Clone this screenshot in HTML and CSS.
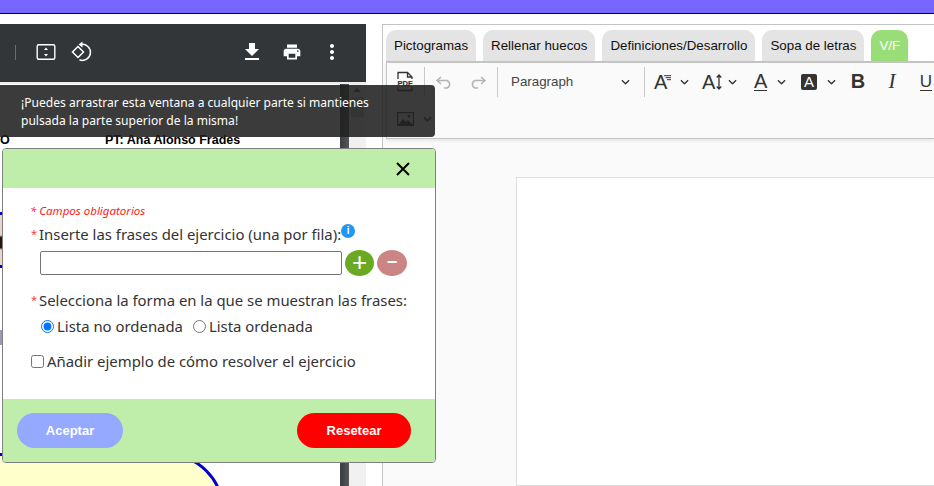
FILE: index.html
```html
<!DOCTYPE html>
<html lang="es">
<head>
    <meta charset="UTF-8">
    <title>Ejercicios</title>
    <link rel="stylesheet" href="styles.css">
</head>
<body>
    <svg class="defs" width="0" height="0">
        <symbol id="chev" viewBox="0 0 10 6"><path d="M1 1l4 4 4-4" fill="none" stroke="currentColor" stroke-width="1.5"/></symbol>
    </svg>
    <div class="topbar"></div>
    <div class="main">
        <!-- visor del pdf -->
        <section class="viewer">
            <div class="pdf-toolbar">
                <span class="pdf-sep"></span>
                <svg class="pdf-icon fit" viewBox="0 0 24 24"><rect x="3.2" y="4.700" width="17.600" height="14.600" rx="1.500" fill="none" stroke="#fff" stroke-width="1.400"/><path d="M12 7.500l2 2.500h-4zM12 16.500l-2-2.500h4z" fill="#fff"/></svg>
                <svg class="pdf-icon rotate" viewBox="0 0 24 24"><path d="M8 6.500l-5.500 5.500 5.500 5.500 5.500-5.500z" fill="none" stroke="#fff" stroke-width="1.500"/><path d="M11 4.500a8 8 0 1 1-1.500 15.300" fill="none" stroke="#fff" stroke-width="1.500"/><path d="M12.500 1.500v6l-4-3z" fill="#fff"/></svg>
                <div class="pdf-actions">
                    <svg class="pdf-icon" viewBox="0 0 24 24"><path fill="#fff" d="M19 9h-4V3H9v6H5l7 7 7-7zM5 18v2h14v-2H5z"/></svg>
                    <svg class="pdf-icon small" viewBox="0 0 24 24"><path fill="#fff" d="M19 8H5c-1.660 0-3 1.340-3 3v6h4v4h12v-4h4v-6c0-1.660-1.340-3-3-3zm-3 11H8v-5h8v5zm3-7c-.55 0-1-.45-1-1s.45-1 1-1 1 .45 1 1-.45 1-1 1zm-1-9H6v4h12V3z"/></svg>
                    <svg class="pdf-icon" viewBox="0 0 24 24"><path fill="#fff" d="M12 8c1.100 0 2-.9 2-2s-.9-2-2-2-2 .9-2 2 .9 2 2 2zm0 2c-1.100 0-2 .9-2 2s.9 2 2 2 2-.9 2-2-.9-2-2-2zm0 6c-1.100 0-2 .9-2 2s.9 2 2 2 2-.9 2-2-.9-2-2-2z"/></svg>
                </div>
            </div>
            <div class="pdf-body">
                <div class="pdf-page">
                    <span class="pdf-text pdf-o">O</span>
                    <span class="pdf-text pdf-pt">PT: Ana Alonso Frades</span>
                    <div class="pdf-pic"></div>
                    <div class="pdf-mark"></div>
                    <div class="pdf-bubble"></div>
                </div>
                <div class="pdf-shadow"></div>
                <div class="pdf-scroll">
                    <span class="scroll-arrow"></span>
                    <span class="scroll-thumb"></span>
                </div>
            </div>
        </section>

        <!-- editor -->
        <section class="editor">
            <div class="tabs">
                <span class="tab">Pictogramas</span>
                <span class="tab">Rellenar huecos</span>
                <span class="tab">Definiciones/Desarrollo</span>
                <span class="tab">Sopa de letras</span>
                <span class="tab tab-active">V/F</span>
            </div>
            <div class="toolbar">
                <div class="tb-row">
                    <span class="tb-btn w34">
                        <svg class="pdf-file" width="18" height="21" viewBox="0 0 18 21"><path d="M2 8V1.500h9.500l4.500 4.500v2M2 16v3.500h14V16M11.500 1.500V6H16" fill="none" stroke="#333" stroke-width="1.300"/><text x="9" y="14.500" text-anchor="middle" class="pdf-label">PDF</text></svg>
                    </span>
                    <span class="tb-sep"></span>
                    <span class="tb-btn w34">
                        <svg width="18" height="14" viewBox="0 0 18 14"><path d="M6 2L2 5.500 6 9M2 5.500h10a4 4 0 0 1 0 7.500H9" fill="none" stroke="#b4b4b4" stroke-width="1.500"/></svg>
                    </span>
                    <span class="tb-btn w34">
                        <svg width="18" height="14" viewBox="0 0 18 14"><path d="M12 2l4 3.500L12 9M16 5.500H6a4 4 0 0 0 0 7.500h3" fill="none" stroke="#b4b4b4" stroke-width="1.500"/></svg>
                    </span>
                    <span class="tb-sep"></span>
                    <span class="tb-para">
                        <span>Paragraph</span>
                        <svg class="chev" viewBox="0 0 10 6"><use href="#chev"/></svg>
                    </span>
                    <span class="tb-sep"></span>
                    <span class="tb-btn split w48 family">
                        <span class="glyph-wrap"><span class="glyph">A</span><svg class="glyph-lines" width="7" height="7" viewBox="0 0 7 7"><path d="M0 .7h7M1.500 2.700H7M3 4.700h4" stroke="#333" stroke-width="1"/></svg></span>
                        <svg class="chev" viewBox="0 0 10 6"><use href="#chev"/></svg>
                    </span>
                    <span class="tb-btn split w48 size">
                        <span class="glyph">A</span>
                        <svg class="size-arrow" width="6" height="16" viewBox="0 0 6 16"><path d="M3 1v14M.8 3.500L3 1l2.200 2.500M.8 12.500L3 15l2.200-2.500" fill="none" stroke="#333" stroke-width="1.300"/></svg>
                        <svg class="chev" viewBox="0 0 10 6"><use href="#chev"/></svg>
                    </span>
                    <span class="tb-btn split w49 color">
                        <span class="glyph-under">A</span>
                        <svg class="chev" viewBox="0 0 10 6"><use href="#chev"/></svg>
                    </span>
                    <span class="tb-btn split w49 bgcolor">
                        <span class="glyph-box">A</span>
                        <svg class="chev" viewBox="0 0 10 6"><use href="#chev"/></svg>
                    </span>
                    <span class="tb-btn w34 fmt-bold">B</span>
                    <span class="tb-btn w34 fmt-italic">I</span>
                    <span class="tb-btn w34 fmt-under"><span>U</span></span>
                </div>
                <div class="tb-row">
                    <span class="tb-btn w34">
                        <svg width="17" height="14" viewBox="0 0 17 14"><rect x=".6" y=".6" width="15.800" height="12.800" fill="none" stroke="#333" stroke-width="1.200"/><path d="M1 13l5-6 3 3 2-2 5 5z" fill="#333"/><circle cx="12" cy="4" r="1.500" fill="#333"/></svg>
                    </span>
                    <svg class="chev img-chev" viewBox="0 0 10 6"><use href="#chev"/></svg>
                </div>
            </div>
            <div class="doc-area">
                <div class="doc-page"></div>
            </div>
        </section>
    </div>

    <!-- aviso y ventana flotante -->
    <div class="hint">¡Puedes arrastrar esta ventana a cualquier parte si mantienes pulsada la parte superior de la misma!</div>
    <div class="dialog">
        <div class="dialog-head">
            <svg class="close" width="16" height="16" viewBox="0 0 16 16"><path d="M2 2l12 12M14 2L2 14" stroke="#000" stroke-width="2"/></svg>
        </div>
        <form class="dialog-body" name="Frases">
            <p class="required-note">* Campos obligatorios</p>
            <div class="field-label">
                <span class="star">*</span>
                <span>Inserte las frases del ejercicio (una por fila):</span>
                <span class="info">i</span>
            </div>
            <div class="phrase-row">
                <input type="text" class="phrase-input" name="txtFrase">
                <span class="round-btn add">+</span>
                <span class="round-btn remove">−</span>
            </div>
            <div class="field-label second">
                <span class="star">*</span>
                <span>Selecciona la forma en la que se muestran las frases:</span>
            </div>
            <div class="radio-row">
                <label class="opt"><input type="radio" name="lista" checked>Lista no ordenada</label>
                <label class="opt"><input type="radio" name="lista">Lista ordenada</label>
            </div>
            <label class="check-row"><input type="checkbox" name="ejemplo">Añadir ejemplo de cómo resolver el ejercicio</label>
        </form>
        <div class="dialog-foot">
            <span class="btn btn-ok">Aceptar</span>
            <span class="btn btn-reset">Resetear</span>
        </div>
    </div>
</body>
</html>
```

FILE: styles.css
```css
* {
    box-sizing: border-box;
}
html, body {
    margin: 0;
    height: 486px;
    overflow: hidden;
    background: #fff;
    font-family: "Liberation Sans", Arial, sans-serif;
}
.defs {
    position: absolute;
}
.topbar {
    height: 14px;
    background: #7766ff;
    border-bottom: 1px solid #000;
}
.main {
    display: flex;
    gap: 16px;
    margin-top: 10px;
    height: 462px;
}

/* visor pdf */
.viewer {
    width: 366px;
    flex: none;
    display: flex;
    flex-direction: column;
}
.pdf-toolbar {
    height: 58px;
    flex: none;
    background: #323639;
    display: flex;
    align-items: center;
    padding: 0 22px 2px 15px;
    gap: 12px;
}
.pdf-sep {
    width: 1px;
    height: 15px;
    background: #6b6e70;
    margin-right: 6px;
}
.pdf-icon {
    width: 24px;
    height: 24px;
    flex: none;
}
.pdf-icon.small {
    width: 20px;
    height: 20px;
}
.pdf-actions {
    margin-left: auto;
    display: flex;
    align-items: center;
    gap: 18px;
}
.pdf-body {
    flex: 1;
    display: flex;
    border-top: 2px solid #eee;
}
.pdf-page {
    flex: 1;
    position: relative;
    overflow: hidden;
}
.pdf-text {
    position: absolute;
    top: 49px;
    font-size: 12.500px;
    font-weight: bold;
    color: #000;
}
.pdf-o {
    left: 0;
}
.pdf-pt {
    left: 105px;
}
.pdf-pic {
    position: absolute;
    left: 0;
    top: 128px;
    width: 4px;
    height: 56px;
    background: linear-gradient(#e8d4d0 0, #e8d4d0 40%, #2a1410 45%, #2a1410 65%, #e8d4d0 70%);
    border-top: 3px solid #0000cc;
    border-bottom: 3px solid #0000cc;
}
.pdf-mark {
    position: absolute;
    left: 0;
    top: 246px;
    width: 3px;
    height: 15px;
    background: #9a9ab8;
}
.pdf-bubble {
    position: absolute;
    left: -200px;
    top: 369px;
    width: 424px;
    height: 200px;
    background: #ffffcc;
    border: 3px solid #0000cc;
    border-radius: 57px;
}
.pdf-shadow {
    width: 9px;
    background: linear-gradient(90deg, #3a3d40, #55585a);
}
.pdf-scroll {
    width: 17px;
    background: #f1f1f1;
    position: relative;
}
.scroll-arrow {
    position: absolute;
    left: 4px;
    top: 4px;
    border-left: 4px solid transparent;
    border-right: 4px solid transparent;
    border-bottom: 4px solid #505050;
}
.scroll-thumb {
    position: absolute;
    left: 2px;
    top: 13px;
    width: 13px;
    height: 20px;
    background: #c1c1c1;
}

/* editor */
.editor {
    flex: 1;
    min-width: 0;
    display: flex;
    flex-direction: column;
    border-top: 1px solid #c4c4c4;
    border-left: 1px solid #c4c4c4;
    background: #fafafa;
    overflow: hidden;
}
.tabs {
    display: flex;
    gap: 7px;
    padding: 5px 0 0 3px;
    background: #fff;
    height: 36px;
    flex: none;
}
.tab {
    height: 31px;
    padding: 0 8px;
    display: flex;
    align-items: center;
    background: #e4e4e4;
    border-radius: 10px 10px 0 0;
    color: #111;
    font-size: 13.333px;
    white-space: nowrap;
}
.tab-active {
    background: #98dd77;
    color: #fff;
}
.toolbar {
    margin-left: 3px;
    height: 78px;
    flex: none;
    border: 1px solid #c4c4c4;
    border-top-width: 2px;
    border-right: 0;
    background: #fafafa;
    box-shadow: 0 2px 3px rgba(0, 0, 0, .08);
    padding-left: 1px;
}
.tb-row {
    display: flex;
    align-items: center;
    height: 37px;
    white-space: nowrap;
}
.tb-row + .tb-row {
    height: 38px;
}
.tb-btn {
    height: 30px;
    flex: none;
    display: flex;
    align-items: center;
    justify-content: center;
    color: #333;
}
.w34 {
    width: 34px;
}
.w48 {
    width: 48px;
}
.w49 {
    width: 49px;
}
.split {
    justify-content: flex-start;
    gap: 10px;
}
.family, .size {
    padding-left: 7px;
}
.family {
    gap: 9px;
}
.size {
    gap: 0;
}
.size-arrow {
    margin: 0 6px 0 1px;
}
.color {
    padding-left: 11px;
}
.bgcolor {
    padding-left: 9px;
}
.tb-sep {
    width: 1px;
    height: 30px;
    flex: none;
    margin: 0 2px;
    background: #c9c9c9;
}
.tb-para {
    width: 142px;
    flex: none;
    display: flex;
    align-items: center;
    justify-content: space-between;
    padding: 0 12px 0 11px;
    font-size: 13.333px;
    color: #444;
}
.chev {
    width: 9px;
    height: 6px;
    color: #333;
    flex: none;
}
.img-chev {
    margin-left: 1px;
}
.pdf-label {
    font: bold 7.500px "Liberation Sans", sans-serif;
    fill: #333;
    stroke: #333;
    stroke-width: .2px;
}
.glyph {
    font-size: 20px;
    color: #333;
    line-height: 1;
}
.glyph-wrap {
    display: flex;
    align-items: flex-start;
}
.glyph-lines {
    margin-left: -3px;
    margin-top: 3px;
}
.glyph-under {
    font-size: 20px;
    color: #333;
    line-height: 17px;
    border-bottom: 1.500px solid #333;
    margin-top: 1px;
}
.glyph-box {
    width: 16px;
    height: 16px;
    background: #333;
    color: #fff;
    border-radius: 2px;
    font-size: 15px;
    line-height: 16px;
    text-align: center;
}
.fmt-bold {
    font-weight: bold;
    font-size: 20px;
}
.fmt-italic {
    font-family: "Liberation Serif", serif;
    font-style: italic;
    font-size: 21px;
}
.fmt-under {
    font-size: 17px;
}
.fmt-under span {
    border-bottom: 1px solid #333;
    line-height: 17px;
}
.doc-area {
    flex: 1;
    padding: 38px 0 0 133px;
}
.doc-page {
    height: 100%;
    background: #fff;
    border: 1px solid #ddd;
    border-right: 0;
}

/* aviso */
.hint {
    position: absolute;
    left: 0;
    top: 85px;
    width: 435px;
    height: 52px;
    padding: 9px 60px 0 21px;
    background: rgba(32, 32, 32, .88);
    border-radius: 0 4px 4px 0;
    color: #fff;
    font: 12.070px/17.500px "Noto Sans", sans-serif;
}

/* ventana */
.dialog {
    position: absolute;
    left: 2px;
    top: 148px;
    width: 434px;
    height: 315px;
    display: flex;
    flex-direction: column;
    background: #fff;
    border: 1px solid #808080;
    border-radius: 4px;
    overflow: hidden;
    font-family: "Noto Sans", sans-serif;
    color: #333;
    font-size: 14.900px;
}
.dialog-head {
    height: 39px;
    flex: none;
    background: #bfeeaa;
    display: flex;
    align-items: center;
    justify-content: flex-end;
    padding-right: 24px;
}
.dialog-body {
    flex: 1;
    padding: 15px 0 0 28px;
}
.required-note {
    margin: 0 0 5px -1px;
    color: #ff1a1a;
    font-style: italic;
    font-size: 11.500px;
    line-height: 16px;
}
.field-label {
    display: flex;
    align-items: flex-start;
    height: 21px;
    line-height: 20px;
    white-space: nowrap;
}
.field-label.second {
    margin-top: 14px;
}
.star {
    color: #ff4040;
    font-size: 11px;
    width: 8px;
}
.info {
    width: 14px;
    height: 14px;
    border-radius: 50%;
    background: #2196f3;
    color: #fff;
    font: bold 10px/14px "Liberation Sans", sans-serif;
    text-align: center;
}
.phrase-row {
    display: flex;
    align-items: center;
    gap: 3px;
    margin: 5px 0 0 9px;
}
.phrase-input {
    width: 302px;
    height: 24px;
    border: 1px solid #767676;
    border-radius: 2px;
    outline: none;
    padding: 0 4px;
}
.round-btn {
    width: 29px;
    height: 26px;
    border-radius: 50%;
    color: #fff;
    font: 26px/25px "Liberation Sans", sans-serif;
    text-align: center;
}
.add {
    background: #6aaa22;
}
.remove {
    width: 30px;
    background: #cc8585;
    font-size: 18px;
    font-weight: bold;
}
.radio-row {
    display: flex;
    gap: 10px;
    margin: 5px 0 0 10px;
    line-height: 20px;
}
.opt {
    display: flex;
    align-items: center;
    gap: 3px;
}
.opt input, .check-row input {
    margin: 0;
    width: 13px;
    height: 13px;
}
.check-row {
    display: flex;
    align-items: center;
    gap: 3px;
    margin-top: 15px;
    line-height: 20px;
}
.dialog-foot {
    height: 63px;
    flex: none;
    background: #bfeeaa;
    display: flex;
    justify-content: space-between;
    align-items: flex-start;
    padding: 14px 24px 0 14px;
}
.btn {
    height: 35px;
    border-radius: 18px;
    color: #fff;
    font: bold 13px/35px "Liberation Sans", sans-serif;
    text-align: center;
}
.btn-ok {
    width: 106px;
    background: #94a9ff;
}
.btn-reset {
    width: 114px;
    background: #ff0000;
}
```
